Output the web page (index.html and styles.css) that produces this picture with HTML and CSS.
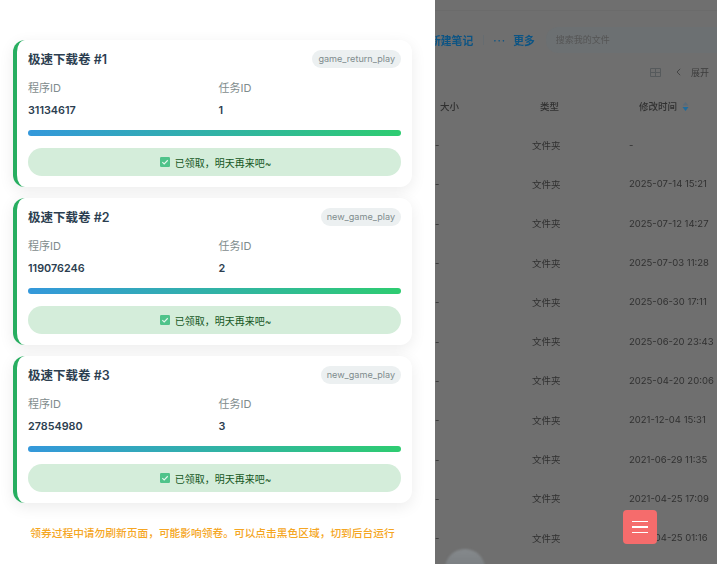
FILE: index.html
```html
<!DOCTYPE html>
<html lang="zh">
<head>
<meta charset="utf-8">
<title>极速下载卷</title>
<link rel="stylesheet" href="styles.css">
</head>
<body>
<div class="app">
  <aside class="panel">
    <section class="card">
      <div class="card-head"><h3>极速下载卷 #1</h3><span class="tag">game_return_play</span></div>
      <div class="info">
        <div class="field"><span class="label">程序ID</span><span class="value">31134617</span></div>
        <div class="field"><span class="label">任务ID</span><span class="value">1</span></div>
      </div>
      <div class="bar"></div>
      <div class="status"><svg class="check" viewBox="0 0 12 12"><rect width="12" height="12" rx="1.5" fill="#4fc38a"/><path d="M2.8 6.2 5 8.3 9.3 3.9" fill="none" stroke="#e6f7ee" stroke-width="1.3"/></svg>已领取，明天再来吧~</div>
    </section>
    <section class="card">
      <div class="card-head"><h3>极速下载卷 #2</h3><span class="tag">new_game_play</span></div>
      <div class="info">
        <div class="field"><span class="label">程序ID</span><span class="value">119076246</span></div>
        <div class="field"><span class="label">任务ID</span><span class="value">2</span></div>
      </div>
      <div class="bar"></div>
      <div class="status"><svg class="check" viewBox="0 0 12 12"><rect width="12" height="12" rx="1.5" fill="#4fc38a"/><path d="M2.8 6.2 5 8.3 9.3 3.9" fill="none" stroke="#e6f7ee" stroke-width="1.3"/></svg>已领取，明天再来吧~</div>
    </section>
    <section class="card">
      <div class="card-head"><h3>极速下载卷 #3</h3><span class="tag">new_game_play</span></div>
      <div class="info">
        <div class="field"><span class="label">程序ID</span><span class="value">27854980</span></div>
        <div class="field"><span class="label">任务ID</span><span class="value">3</span></div>
      </div>
      <div class="bar"></div>
      <div class="status"><svg class="check" viewBox="0 0 12 12"><rect width="12" height="12" rx="1.5" fill="#4fc38a"/><path d="M2.8 6.2 5 8.3 9.3 3.9" fill="none" stroke="#e6f7ee" stroke-width="1.3"/></svg>已领取，明天再来吧~</div>
    </section>
    <p class="notice">领券过程中请勿刷新页面，可能影响领卷。可以点击黑色区域，切到后台运行</p>
  </aside>
  <main class="backdrop">
    <div class="blurred">
      <div class="topline"></div>
      <div class="toolbar">
        <span class="link first">新建笔记</span><span class="sep"></span><span class="dots">···</span><span class="link">更多</span>
        <span class="search">搜索我的文件</span>
      </div>
      <div class="viewbar">
        <svg class="grid-ico" viewBox="0 0 11 9"><path d="M.5.5h10v8H.5zM5.5.5v8M.5 4.5h10" fill="none" stroke="#565a5c"/></svg>
        <svg class="chev" viewBox="0 0 5 8"><path d="M4.2.8 1 4l3.2 3.2" fill="none" stroke="#454545"/></svg>
        <span>展开</span>
      </div>
      <div class="row head"><span>大小</span><span>类型</span><span class="time">修改时间<svg class="sort" viewBox="0 0 7 9"><path d="M3.5 0 6.5 3.5H.5z" fill="#5a6a78"/><path d="M3.5 9 6.5 5H.5z" fill="#1f6c9e"/></svg></span></div>
      <div class="row"><span>-</span><span>文件夹</span><span>-</span></div>
      <div class="row"><span>-</span><span>文件夹</span><span>2025-07-14 15:21</span></div>
      <div class="row"><span>-</span><span>文件夹</span><span>2025-07-12 14:27</span></div>
      <div class="row"><span>-</span><span>文件夹</span><span>2025-07-03 11:28</span></div>
      <div class="row"><span>-</span><span>文件夹</span><span>2025-06-30 17:11</span></div>
      <div class="row"><span>-</span><span>文件夹</span><span>2025-06-20 23:43</span></div>
      <div class="row"><span>-</span><span>文件夹</span><span>2025-04-20 20:06</span></div>
      <div class="row"><span>-</span><span>文件夹</span><span>2021-12-04 15:31</span></div>
      <div class="row"><span>-</span><span>文件夹</span><span>2021-06-29 11:35</span></div>
      <div class="row"><span>-</span><span>文件夹</span><span>2021-04-25 17:09</span></div>
      <div class="row"><span>-</span><span>文件夹</span><span>2021-04-25 01:16</span></div>
    </div>
    <div class="avatar"></div>
    <button class="fab" aria-label="菜单"><i></i><i></i><i></i></button>
  </main>
</div>
</body>
</html>
```
FILE: styles.css
```css
* { box-sizing: border-box; }
html, body { margin: 0; height: 100%; overflow: hidden; }
body {
  font-family: "Inter", "Noto Sans CJK SC", sans-serif;
  color: #2c3e50;
}
.app { display: flex; height: 564px; width: 717px; overflow: hidden; }

.panel {
  width: 435px;
  flex: none;
  background: #fff;
  padding: 40px 23px 0 13px;
  display: flex;
  flex-direction: column;
  gap: 11px;
}
.card {
  height: 147px;
  background: #fff;
  border-left: 4px solid #27ae60;
  border-radius: 12px;
  box-shadow: 0 4px 15px rgba(0, 0, 0, .08);
  padding: 10px 11px 10px 11px;
  display: flex;
  flex-direction: column;
}
.card-head { display: flex; justify-content: space-between; align-items: center; height: 18px; }
.card-head h3 { margin: 1px 0 0; font-size: 12.5px; line-height: 18px; font-weight: 600; color: #2c3e50; }
.tag {
  background: #ecf0f1;
  color: #7f8c8d;
  font-size: 9.1px;
  height: 18px;
  line-height: 18px;
  padding: 0 6px;
  border-radius: 9px;
}
.info { display: grid; grid-template-columns: 1fr 1fr; column-gap: 8px; margin-top: 12px; }
.field { display: flex; flex-direction: column; gap: 7px; }
.label { font-size: 11px; line-height: 16px; color: #7f8c8d; }
.value { font-size: 10.8px; line-height: 16px; font-weight: 600; color: #2c3e50; }
.bar {
  height: 6px;
  margin-top: 11px;
  border-radius: 3px;
  background: linear-gradient(90deg, #3498db, #2ecc71);
}
.status {
  height: 28px;
  margin-top: 12px;
  padding-left: 2px;
  border-radius: 14px;
  background: #d4edda;
  color: #155724;
  font-size: 10px;
  display: flex;
  align-items: center;
  justify-content: center;
  gap: 5px;
}
.check { width: 10px; height: 10px; }
.notice {
  margin: 11px 0 0;
  text-align: center;
  font-size: 10.73px;
  color: #f5a623;
  font-weight: 500;
  white-space: nowrap;
}

.backdrop {
  flex: 1;
  position: relative;
  background: #6f6f6f;
  overflow: hidden;
}
.blurred { filter: blur(.7px); color: #2e2e2e; font-size: 9.5px; }
.topline { height: 11px; border-bottom: 1px solid #6b6b6b; }
.toolbar { display: flex; align-items: center; height: 34px; margin-top: 12px; gap: 9px; }
.link { color: #0c5484; font-weight: 600; font-size: 10.8px; white-space: nowrap; flex: none; }
.link.first { margin-left: -5px; }
.sep { width: 1px; height: 10px; background: #666c70; margin-left: 1px; }
.dots { color: #0c5484; font-weight: 700; font-size: 10px; letter-spacing: 1px; margin-right: -2px; }
.search { flex: 1; color: #555; font-size: 9px; background: #6c7072; height: 26px; line-height: 26px; padding-left: 10px; border-radius: 12px 0 0 12px; margin-left: 2px; }
.viewbar { display: flex; justify-content: flex-end; align-items: center; gap: 10px; height: 14px; margin-top: 8px; padding-right: 8px; color: #3c3c3c; font-size: 9px; }
.grid-ico { width: 11px; height: 9px; margin-right: 5px; }
.chev { width: 5px; height: 8px; }
.row {
  display: grid;
  grid-template-columns: 97px 97px 1fr;
  height: 39.3px;
  align-items: center;
  color: #303030;
}
.row.head { height: 39px; margin-top: 7px; font-weight: 500; padding-left: 5px; grid-template-columns: 100px 99px 1fr; }
.time { display: inline-flex; align-items: center; gap: 5px; }
.sort { width: 7px; height: 9px; margin-top: 2px; }
.avatar {
  position: absolute;
  left: 10px;
  top: 549px;
  width: 40px;
  height: 40px;
  border-radius: 50%;
  background: linear-gradient(180deg, #85898c, #6f7376);
  filter: blur(1px);
}
.fab {
  position: absolute;
  left: 188px;
  top: 510px;
  width: 34px;
  height: 34px;
  border: 0;
  border-radius: 4px;
  background: #f56c6c;
  padding: 0;
  display: flex;
  flex-direction: column;
  align-items: center;
  justify-content: center;
  gap: 4px;
}
.fab i { display: block; width: 16px; height: 1.5px; background: #fff; }
```
